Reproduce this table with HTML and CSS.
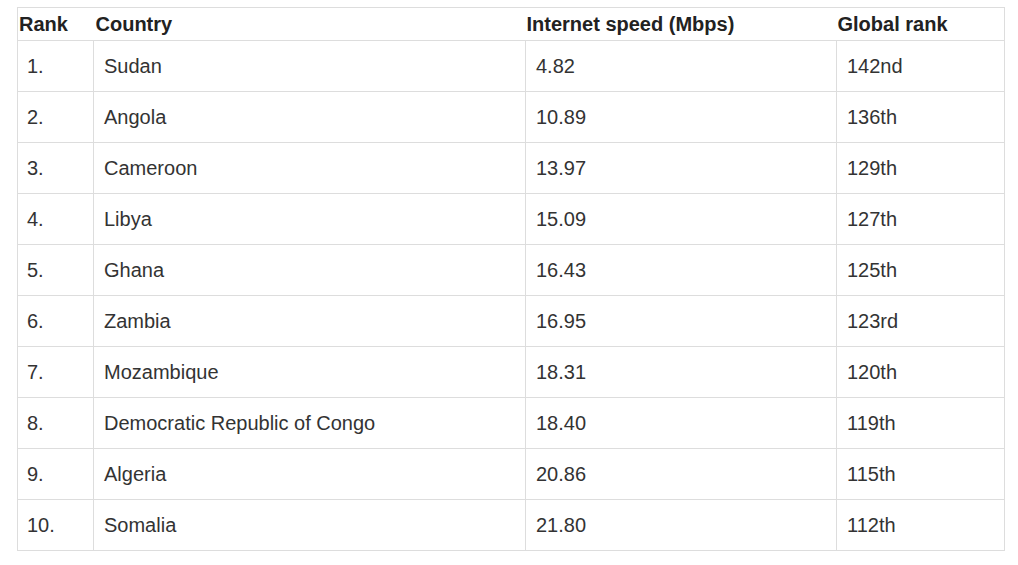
FILE: index.html
```html
<!DOCTYPE html>
<html>
<head>
<meta charset="utf-8">
<link rel="stylesheet" href="styles.css">
</head>
<body>
<table class="speed-table">
  <colgroup>
    <col class="c-rank">
    <col class="c-country">
    <col class="c-speed">
    <col class="c-global">
  </colgroup>
  <thead>
    <tr><th>Rank</th><th>Country</th><th>Internet speed (Mbps)</th><th>Global rank</th></tr>
  </thead>
  <tbody>
    <tr><td>1.</td><td>Sudan</td><td>4.82</td><td>142nd</td></tr>
    <tr><td>2.</td><td>Angola</td><td>10.89</td><td>136th</td></tr>
    <tr><td>3.</td><td>Cameroon</td><td>13.97</td><td>129th</td></tr>
    <tr><td>4.</td><td>Libya</td><td>15.09</td><td>127th</td></tr>
    <tr><td>5.</td><td>Ghana</td><td>16.43</td><td>125th</td></tr>
    <tr><td>6.</td><td>Zambia</td><td>16.95</td><td>123rd</td></tr>
    <tr><td>7.</td><td>Mozambique</td><td>18.31</td><td>120th</td></tr>
    <tr><td>8.</td><td>Democratic Republic of Congo</td><td>18.40</td><td>119th</td></tr>
    <tr><td>9.</td><td>Algeria</td><td>20.86</td><td>115th</td></tr>
    <tr><td>10.</td><td>Somalia</td><td>21.80</td><td>112th</td></tr>
  </tbody>
</table>
</body>
</html>
```
FILE: styles.css
```css
html, body {
  margin: 0;
  padding: 0;
  background: #fff;
}
body {
  font-family: "Liberation Sans", Arial, sans-serif;
  font-size: 20px;
  color: #333;
}
.speed-table {
  border-collapse: collapse;
  margin: 7px 0 0 17px;
  width: 987px;
  table-layout: fixed;
  border: 1px solid #ddd;
}
.c-rank { width: 76px; }
.c-country { width: 432px; }
.c-speed { width: 311px; }
.c-global { width: 168px; }
.speed-table th {
  font-weight: bold;
  color: #222;
  text-align: left;
  padding: 0 1px;
  height: 32px;
  line-height: 22px;
  vertical-align: middle;
  border-bottom: 1px solid #ddd;
}
.speed-table th:nth-child(2) {
  padding-left: 2px;
}
.speed-table td {
  padding: 0 10px;
  height: 50px;
  line-height: 22px;
  vertical-align: middle;
  border: 1px solid #ddd;
}
.speed-table td:first-child {
  padding-left: 9px;
}
```
